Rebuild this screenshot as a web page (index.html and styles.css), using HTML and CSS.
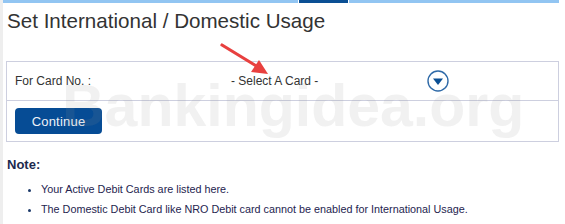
FILE: index.html
```html
<!DOCTYPE html>
<html>
<head>
<meta charset="utf-8">
<link rel="stylesheet" href="styles.css">
</head>
<body>
<div class="page">
  <div class="topbar">
    <span class="seg seg-a"></span>
    <span class="seg seg-b"></span>
    <span class="seg seg-c"></span>
  </div>
  <div class="main">
    <h1 class="title">Set International / Domestic Usage</h1>
    <div class="box">
      <div class="row row-card">
        <span class="label">For Card No. :</span>
        <div class="select">
          <span class="select-text">- Select A Card -</span>
          <svg class="select-icon" width="22" height="22" viewBox="0 0 22 22">
            <circle cx="11" cy="11" r="10" fill="#fff" stroke="#2f6aa8" stroke-width="1.4"/>
            <path d="M6 8.5 H16 L11 15 Z" fill="#0b4f94"/>
          </svg>
        </div>
      </div>
      <div class="row row-btn">
        <button class="btn">Continue</button>
      </div>
    </div>
    <div class="note">
      <div class="note-title">Note:</div>
      <ul class="note-list">
        <li>Your Active Debit Cards are listed here.</li>
        <li>The Domestic Debit Card like NRO Debit card cannot be enabled for International Usage.</li>
      </ul>
    </div>
  </div>
  <div class="watermark">Bankingidea.org</div>
  <svg class="arrow" width="60" height="40" viewBox="0 0 60 40">
    <line x1="2" y1="2" x2="38" y2="24" stroke="#e8403f" stroke-width="3.2" stroke-linecap="round"/>
    <path d="M48 31 L31 29 L39 17 Z" fill="#e8403f"/>
  </svg>
</div>
</body>
</html>
```
FILE: styles.css
```css
* { box-sizing: border-box; }
html, body { margin: 0; padding: 0; background: #fff; }
body { font-family: "Liberation Sans", Arial, sans-serif; color: #333; }
.page {
  position: relative;
  width: 565px;
  height: 224px;
  overflow: hidden;
  border-left: 3px solid #eeeeee;
}
.topbar {
  display: flex;
  gap: 1px;
  width: 556px;
  height: 3px;
}
.seg { display: block; height: 3px; background: #92c5f2; }
.seg-a { width: 295px; }
.seg-b { width: 49px; background: #0a4f94; }
.seg-c { flex: 1; }
.main { padding-left: 4px; }
.title {
  margin: 6px 0 0 0;
  font-size: 20.6px;
  line-height: 24px;
  font-weight: normal;
  color: #333;
}
.box {
  margin-top: 28px;
  margin-left: -1px;
  width: 553px;
  border: 1px solid #cdcfdf;
}
.row { display: flex; align-items: center; }
.row-card {
  height: 39px;
  padding-left: 8px;
  border-bottom: 1px solid #cdcfdf;
  font-size: 12px;
}
.label { width: 216px; }
.select {
  display: flex;
  align-items: center;
  justify-content: space-between;
  width: 218px;
}
.select-icon { display: block; }
.row-btn { height: 40px; padding-left: 8px; }
.btn {
  width: 87px;
  height: 26px;
  border: 0;
  border-radius: 4px;
  background: #064c95;
  color: #eef2f8;
  font-family: "Liberation Sans", Arial, sans-serif;
  font-size: 13px;
  letter-spacing: 0.2px;
  padding: 0;
}
.note { margin-top: 15px; }
.note-title {
  font-size: 13px;
  font-weight: bold;
  line-height: 16px;
  color: #1c2a4e;
}
.note-list {
  margin: 6px 0 0 0;
  padding-left: 34px;
  font-size: 10.8px;
  line-height: 20px;
  color: #25244f;
}
.note-list li::marker { color: #1c3a6a; }
.watermark {
  position: absolute;
  left: 59px;
  top: 71px;
  font-size: 59px;
  font-weight: bold;
  line-height: 70px;
  color: rgba(150, 150, 150, 0.13);
  pointer-events: none;
  white-space: nowrap;
}
.arrow {
  position: absolute;
  left: 217px;
  top: 43px;
}
```
